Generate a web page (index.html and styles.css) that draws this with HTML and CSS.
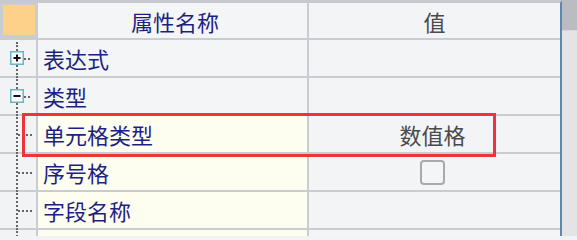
FILE: index.html
```html
<!DOCTYPE html>
<html lang="zh">
<head>
<meta charset="utf-8">
<link rel="stylesheet" href="styles.css">
</head>
<body>
<div class="frame">
  <div class="grid">
    <div class="row header">
      <div class="cell tree corner"></div>
      <div class="cell name head">属性名称</div>
      <div class="cell value head">值</div>
    </div>
    <div class="row">
      <div class="cell tree line first">
        <svg class="toggle" width="14" height="14" viewBox="0 0 14 14"><rect x="0.75" y="0.75" width="12.5" height="12.5" fill="#fafcfd" stroke="#6fb3c6" stroke-width="1.5"/><path d="M3.5 7h7M7 3.5v7" stroke="#111" stroke-width="2"/></svg>
        <span class="conn short"></span>
      </div>
      <div class="cell name">表达式</div>
      <div class="cell value"></div>
    </div>
    <div class="row">
      <div class="cell tree line">
        <svg class="toggle" width="14" height="14" viewBox="0 0 14 14"><rect x="0.75" y="0.75" width="12.5" height="12.5" fill="#fafcfd" stroke="#6fb3c6" stroke-width="1.5"/><path d="M3.5 7h7" stroke="#111" stroke-width="2"/></svg>
        <span class="conn short"></span>
      </div>
      <div class="cell name">类型</div>
      <div class="cell value"></div>
    </div>
    <div class="row">
      <div class="cell tree line"><span class="conn"></span></div>
      <div class="cell name child">单元格类型</div>
      <div class="cell value center">数值格</div>
    </div>
    <div class="row">
      <div class="cell tree line"><span class="conn"></span></div>
      <div class="cell name child">序号格</div>
      <div class="cell value center"><span class="checkbox"></span></div>
    </div>
    <div class="row">
      <div class="cell tree line"><span class="conn"></span></div>
      <div class="cell name child">字段名称</div>
      <div class="cell value"></div>
    </div>
    <div class="row">
      <div class="cell tree line"></div>
      <div class="cell name child"></div>
      <div class="cell value"></div>
    </div>
  </div>
  <div class="scrollbar"><div class="thumb"></div></div>
  <div class="highlight"></div>
</div>
</body>
</html>
```

FILE: styles.css
```css
html, body {
  margin: 0;
  padding: 0;
  background: #f1f3f5;
  overflow: hidden;
}
body {
  font-family: "Noto Sans CJK SC", "Noto Sans", sans-serif;
  width: 577px;
  height: 236px;
}
.frame {
  position: relative;
  display: flex;
  width: 577px;
  height: 236px;
  overflow: hidden;
}
.grid {
  width: 560px;
  border-right: 2px solid #5d88b6;
  border-top: 3px solid #c6c9cd;
  display: flex;
  flex-direction: column;
  background: #f2f4f6;
}
.row {
  display: grid;
  grid-template-columns: 36px 269px 251px;
  column-gap: 2px;
  background: #c9ccd0;
  padding-bottom: 2px;
  height: 36px;
  flex: none;
}
.row.header {
  height: 35px;
}
.cell {
  display: flex;
  align-items: center;
  font-size: 22px;
  line-height: 1;
  overflow: visible;
}
.tree {
  background: #f1f3f5;
  position: relative;
}
.corner {
  background: #fdd18a;
  margin: 2px 1px 3px 3px;
}
.head {
  justify-content: center;
  color: #5a5a5a;
  background: #eef1f4;
}
.name {
  background: #f3f5f7;
  color: #1d1f84;
  padding-left: 5px;
}
.name.child {
  background: #fefef0;
}
.value {
  background: #f2f4f6;
  color: #4a4a4a;
}
.value.center {
  justify-content: center;
  padding-right: 4px;
}
.line::before {
  content: "";
  position: absolute;
  left: 16px;
  top: -2px;
  bottom: -2px;
  border-left: 2px dotted #666;
}
.line.first::before {
  top: 2px;
}
.toggle {
  position: absolute;
  left: 10px;
  top: 11px;
  z-index: 1;
}
.conn {
  position: absolute;
  left: 18px;
  top: 18px;
  width: 14px;
  border-top: 2px dotted #666;
}
.conn.short {
  left: 24px;
  width: 6px;
}
.checkbox {
  display: block;
  width: 21px;
  height: 21px;
  border: 2px solid #a6a9ad;
  border-radius: 4px;
  background: #f4f5f7;
}
.scrollbar {
  width: 15px;
  background: #e4e4e6;
  flex: none;
}
.thumb {
  height: 30px;
  background: #bbbbc2;
  border-bottom: 1px solid #d8d8dc;
}
.highlight {
  position: absolute;
  left: 22px;
  top: 113px;
  width: 468px;
  height: 38px;
  border: 3px solid #f0333b;
  pointer-events: none;
}
```
